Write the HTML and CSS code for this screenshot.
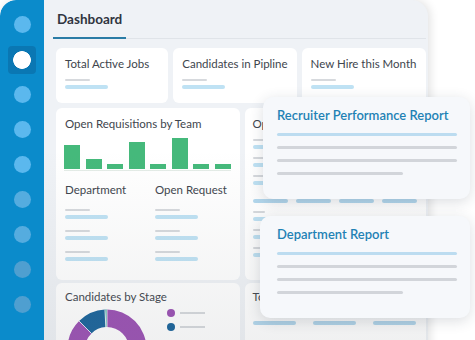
FILE: index.html
```html
<!DOCTYPE html>
<html>
  <head>
    <title>Dashboard</title>
    <link rel="stylesheet" href="styles.css">
  </head>
  <body>
    <div class="stage">
      <div class="panel">
        <div class="sidebar">
          <span class="dot"></span>
          <span class="dot active"></span>
          <span class="dot"></span>
          <span class="dot"></span>
          <span class="dot"></span>
          <span class="dot"></span>
          <span class="dot"></span>
          <span class="dot"></span>
          <span class="dot"></span>
        </div>
        <div class="main">
          <div class="tabs">
            <span class="tab">Dashboard</span>
          </div>

          <div class="stats">
            <div class="card stat">
              <p class="title">Total Active Jobs</p>
              <div class="ph"><i></i><b></b></div>
            </div>
            <div class="card stat">
              <p class="title">Candidates in Pipline</p>
              <div class="ph"><i></i><b></b></div>
            </div>
            <div class="card stat">
              <p class="title">New Hire this Month</p>
              <div class="ph"><i></i><b></b></div>
            </div>
          </div>

          <div class="boards">
            <div class="col">
              <div class="card tall">
                <p class="title">Open Requisitions by Team</p>
                <div class="bars">
                  <span style="height: 24px"></span>
                  <span style="height: 10px"></span>
                  <span style="height: 5px"></span>
                  <span style="height: 27px"></span>
                  <span style="height: 5px"></span>
                  <span style="height: 31px"></span>
                  <span style="height: 5px"></span>
                  <span style="height: 5px"></span>
                </div>
                <div class="table">
                  <p class="title">Department</p>
                  <p class="title">Open Request</p>
                  <div class="ph"><i></i><b></b></div>
                  <div class="ph"><i></i><b></b></div>
                  <div class="ph"><i></i><b></b></div>
                  <div class="ph"><i></i><b></b></div>
                  <div class="ph"><i></i><b></b></div>
                  <div class="ph"><i></i><b></b></div>
                </div>
              </div>
              <div class="card low">
                <p class="title">Candidates by Stage</p>
                <div class="stage-chart">
                  <svg class="donut" width="80" height="40" viewBox="0 0 80 40">
                    <path fill="#9a4fb3" d="M0.5 40 A39.5 39.5 0 0 1 12.07 12.07 L24.44 24.44 A22 22 0 0 0 18 40 Z"/>
                    <path fill="#17629a" d="M12.07 12.07 A39.5 39.5 0 0 1 37.93 0.55 L38.85 18.03 A22 22 0 0 0 24.44 24.44 Z"/>
                    <path fill="#3aa6a0" d="M37.93 0.55 A39.5 39.5 0 0 1 40 0.5 L40 18 A22 22 0 0 0 38.85 18.03 Z"/>
                    <path fill="#9a4fb3" d="M40 0.5 A39.5 39.5 0 0 1 79.5 40 L62 40 A22 22 0 0 0 40 18 Z"/>
                    <g stroke="#ffffff" stroke-width="0.8">
                      <line x1="12.07" y1="12.07" x2="24.44" y2="24.44"/>
                      <line x1="37.93" y1="0.55" x2="38.85" y2="18.03"/>
                      <line x1="40" y1="0.5" x2="40" y2="18"/>
                    </g>
                  </svg>
                  <ul class="legend">
                    <li><span class="swatch purple"></span><i></i></li>
                    <li><span class="swatch navy"></span><i></i></li>
                  </ul>
                </div>
              </div>
            </div>
            <div class="col">
              <div class="card tall">
                <p class="title">Open Positions</p>
                <div class="list">
                  <div class="ph"><i></i><b></b></div>
                  <div class="ph"><i></i><b></b></div>
                  <div class="ph"><i></i><b></b></div>
                </div>
                <div class="strip">
                  <b></b><b></b><b></b><b></b>
                </div>
                <div class="list">
                  <div class="ph"><i></i><b></b></div>
                  <div class="ph"><i></i><b></b></div>
                  <div class="ph"><i></i><b></b></div>
                </div>
              </div>
              <div class="card low">
                <p class="title">Top Sources</p>
                <div class="strip wide">
                  <b></b><b></b><b></b>
                </div>
              </div>
            </div>
          </div>
        </div>
        <div class="shade"></div>
      </div>

      <div class="reports">
        <div class="report first">
          <h3>Recruiter Performance Report</h3>
          <span class="line blue"></span>
          <span class="line"></span>
          <span class="line"></span>
          <span class="line short"></span>
        </div>
        <div class="report">
          <h3>Department Report</h3>
          <span class="line blue"></span>
          <span class="line"></span>
          <span class="line"></span>
          <span class="line short"></span>
        </div>
      </div>
    </div>
  </body>
</html>
```

FILE: styles.css
```css
html, body {
    margin: 0;
    padding: 0;
    background: #ffffff;
    font-family: Lato, "Open Sans", sans-serif;
    color: #3a3f47;
}
.stage {
    position: relative;
    width: 475px;
    height: 340px;
    overflow: hidden;
}
p {
    margin: 0;
}

/* main window */
.panel {
    position: relative;
    display: flex;
    width: 428px;
    height: 360px;
    background: #eff2f6;
    border-radius: 16px 16px 0 0;
    box-shadow: 2px 0 10px rgba(0, 0, 0, 0.12);
    overflow: hidden;
}
.shade {
    position: absolute;
    left: 44px;
    right: 0;
    top: 150px;
    bottom: 0;
    background: linear-gradient(to bottom, rgba(120, 125, 130, 0), rgba(120, 125, 130, 0.12));
    pointer-events: none;
}
.sidebar {
    width: 44px;
    flex: none;
    background: #0b8bcb;
    display: flex;
    flex-direction: column;
    align-items: center;
    gap: 18px;
    padding-top: 16px;
    border-radius: 16px 0 0 0;
}
.dot {
    width: 17px;
    height: 17px;
    border-radius: 50%;
    background: #5bb8ee;
}
.dot:nth-child(n+6) {
    background: #55acdf;
}
.dot:nth-child(n+8) {
    background: #4f9fd0;
}
.dot.active {
    width: 28px;
    height: 28px;
    margin: -5.5px 0;
    border-radius: 4px;
    background: radial-gradient(circle, #ffffff 0, #ffffff 8.5px, #0a77b3 9.2px);
}

.main {
    flex: 1;
    padding: 0 6px 0 12px;
}
.tabs {
    height: 38px;
    border-bottom: 1px solid #e0e4e9;
    display: flex;
    align-items: flex-end;
    margin-left: -3px;
}
.tab {
    display: block;
    padding: 0 4px 10px 4px;
    font-size: 13.5px;
    font-weight: 700;
    color: #2f3540;
    border-bottom: 2px solid #2a7ca6;
    margin-bottom: -1px;
}

.card {
    background: #ffffff;
    border-radius: 6px;
    padding: 9px 9px;
    box-sizing: border-box;
}
.title {
    font-size: 11.5px;
    color: #40454d;
    line-height: 14px;
    white-space: nowrap;
}

/* placeholder text: gray label over blue value */
.ph i {
    display: block;
    width: 25px;
    height: 2px;
    border-radius: 1px;
    background: #d6d9dd;
}
.ph b {
    display: block;
    width: 43px;
    height: 4px;
    margin-top: 4px;
    border-radius: 2px;
    background: #bfe2f4;
}

.stats {
    display: grid;
    grid-template-columns: repeat(3, 1fr);
    gap: 5px;
    margin-top: 9px;
}
.stat {
    height: 55px;
}
.stat .ph {
    margin-top: 8px;
}

.boards {
    display: grid;
    grid-template-columns: 1fr 1fr;
    gap: 5px;
    margin-top: 5px;
}
.col {
    display: flex;
    flex-direction: column;
    gap: 3px;
}
.tall {
    height: 172px;
}
.low {
    height: 80px;
    padding-top: 7px;
}

.bars {
    display: flex;
    align-items: flex-end;
    gap: 5.5px;
    height: 32px;
    margin-top: 6px;
    padding-bottom: 1px;
    border-bottom: 1px solid #e4ece7;
    margin-left: -1px;
}
.bars span {
    width: 16px;
    background: #45b97b;
}
.table {
    display: grid;
    grid-template-columns: 90px 1fr;
    row-gap: 11px;
    margin-top: 12px;
}
.table .title {
    margin-bottom: 1px;
}

.stage-chart {
    display: flex;
    margin-top: 5px;
}
.donut {
    flex: none;
    margin-left: 2px;
}
.legend {
    list-style: none;
    margin: 0 0 0 20px;
    padding: 0;
}
.legend li {
    display: flex;
    align-items: center;
    gap: 5px;
    height: 8px;
    margin-bottom: 6px;
}
.swatch {
    width: 8px;
    height: 8px;
    border-radius: 50%;
}
.swatch.purple {
    background: #9a4fb3;
}
.swatch.navy {
    background: #17629a;
}
.legend i {
    width: 25px;
    height: 2px;
    background: #d6d9dd;
}

.col:last-child .card {
    padding-left: 8px;
}
.list .ph {
    margin-top: 8px;
}
.list .ph i {
    width: 12px;
}
.list .ph b {
    width: 20px;
}
.strip {
    display: flex;
    gap: 8px;
    margin-top: 14px;
}
.strip b {
    width: 35px;
    height: 4px;
    border-radius: 2px;
    background: #b3d8ee;
}
.strip.wide {
    gap: 17px;
    margin-top: 17px;
}
.strip.wide b {
    width: 43px;
}

/* floating report cards */
.reports {
    position: absolute;
    left: 260px;
    top: 97px;
    display: flex;
    flex-direction: column;
    gap: 17px;
}
.report {
    width: 210px;
    height: 102px;
    box-sizing: border-box;
    padding: 10px 13px 0 17px;
    background: #f6f8fb;
    border-radius: 10px;
    box-shadow: 0 3px 14px rgba(40, 50, 70, 0.16);
}
.report.first {
    margin-left: 3px;
    width: 207px;
    padding-left: 14px;
}
.report h3 {
    margin: 0 0 10px 0;
    font-size: 13px;
    font-weight: 600;
    color: #1f82b5;
    line-height: 16px;
    white-space: nowrap;
}
.report .line {
    display: block;
    height: 3px;
    border-radius: 2px;
    background: #d2d5da;
    margin-bottom: 10px;
}
.report .line.blue {
    background: #bcdcf0;
}
.report .line.short {
    width: 126px;
}
```
